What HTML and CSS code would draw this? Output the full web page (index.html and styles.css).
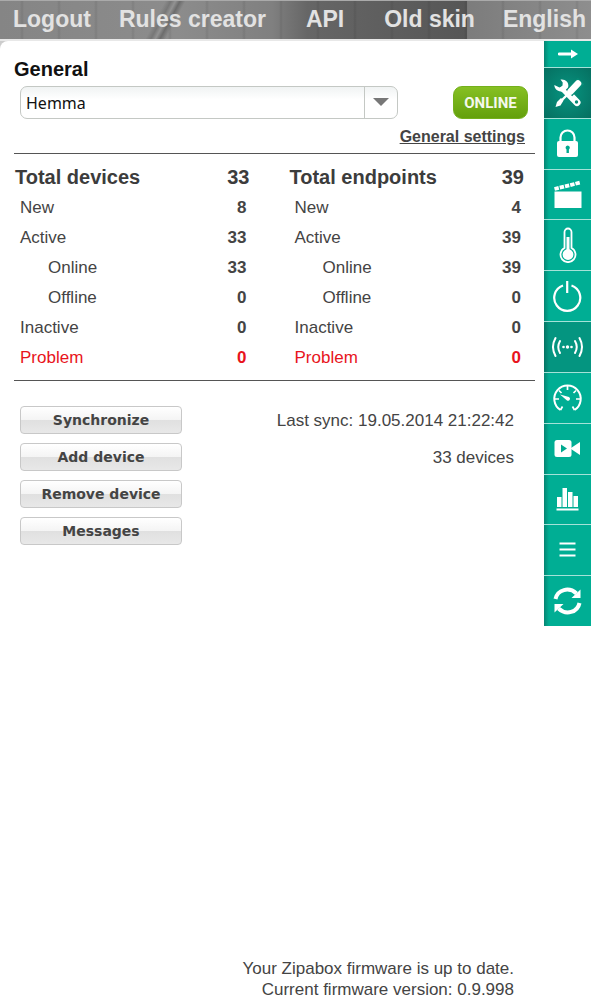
FILE: index.html
```html
<!DOCTYPE html>
<html lang="en">
<head>
    <meta charset="utf-8">
    <meta name="viewport" content="width=device-width, initial-scale=1.0">
    <title>Zipabox</title>
    <link rel="stylesheet" href="styles.css">
</head>
<body>

  <header class="topbar">
    <div class="topbar-group">
      <a href="#">Logout</a>
      <a href="#">Rules creator</a>
    </div>
    <a href="#">API</a>
    <div class="topbar-group">
      <a href="#">Old skin</a>
      <a href="#">English</a>
    </div>
  </header>

  <div class="page">
    <main class="panel">
      <h1><label for="box">General</label></h1>

      <div class="box-row">
        <div class="box-select">
          <select id="box">
            <option>Hemma</option>
          </select>
        </div>
        <button class="online" type="button">ONLINE</button>
      </div>
      <a class="settings" href="#">General settings</a>

      <section class="totals">
        <table>
          <tr class="total"><th>Total devices</th><td>33</td></tr>
          <tr><th>New</th><td>8</td></tr>
          <tr><th>Active</th><td>33</td></tr>
          <tr class="sub"><th>Online</th><td>33</td></tr>
          <tr class="sub"><th>Offline</th><td>0</td></tr>
          <tr><th>Inactive</th><td>0</td></tr>
          <tr class="problem"><th>Problem</th><td>0</td></tr>
        </table>
        <table>
          <tr class="total"><th>Total endpoints</th><td>39</td></tr>
          <tr><th>New</th><td>4</td></tr>
          <tr><th>Active</th><td>39</td></tr>
          <tr class="sub"><th>Online</th><td>39</td></tr>
          <tr class="sub"><th>Offline</th><td>0</td></tr>
          <tr><th>Inactive</th><td>0</td></tr>
          <tr class="problem"><th>Problem</th><td>0</td></tr>
        </table>
      </section>

      <section class="actions">
        <div class="action"><button type="button">Synchronize</button><span>Last sync: 19.05.2014 21:22:42</span></div>
        <div class="action"><button type="button">Add device</button><span>33 devices</span></div>
        <div class="action"><button type="button">Remove device</button></div>
        <div class="action"><button type="button">Messages</button></div>
      </section>

      <footer class="firmware">
        Your Zipabox firmware is up to date.<br>
        Current firmware version: 0.9.998
      </footer>
    </main>

    <nav class="sidebar">
      <a class="collapse" href="#" aria-label="Collapse">
        <svg width="20" height="10" viewBox="0 0 20 10"><path d="M1 5h13" stroke="#fff" stroke-width="2.8" stroke-linecap="round"/><path d="M13 .5l7 4.500-7 4.500z" fill="#fff"/></svg>
      </a>
      <a class="current" href="#" aria-label="Tools">
        <svg viewBox="0 0 32 32">
          <path d="M12 12L25 25.500" stroke="#fff" stroke-width="7" stroke-linecap="round"/>
          <path d="M8.500 2.500c4.500-.8 8.500 2.500 7.800 7-.4 3.500-4 6-7.500 5C5 14.100 2.500 11.500 2.300 8l5.200 2.600 3-1.600.2-3.500z" fill="#fff"/>
          <path d="M29 4L17 16" stroke="#078c77" stroke-width="9"/>
          <path d="M26 6.500L18.500 14.500" stroke="#fff" stroke-width="6.500" stroke-linecap="round"/>
          <path d="M18.500 14.500L8 25" stroke="#fff" stroke-width="2.400"/>
          <path d="M9 21l2.500 2.500-3 5-5 1.500 1.500-5z" fill="#fff"/>
          <circle cx="24.500" cy="25" r="1.700" fill="#078c77"/>
        </svg>
      </a>
      <a href="#" aria-label="Locks">
        <svg viewBox="0 0 32 32">
          <path d="M8.500 14V9.500a7 7 0 0 1 14 0V14" fill="none" stroke="#fff" stroke-width="2.200"/>
          <rect x="5" y="13" width="21" height="16" rx="2" fill="#fff"/>
          <path d="M15.700 17.500a2.200 2.200 0 0 1 1.200 4v3.500h-2.400v-3.500a2.200 2.200 0 0 1 1.200-4z" fill="#00a98f"/>
        </svg>
      </a>
      <a href="#" aria-label="Scenes">
        <svg viewBox="0 0 32 32">
          <path d="M2.500 12.500h27V29h-27z" fill="#fff"/>
          <path d="M2.500 10L28.500 3.500" stroke="#fff" stroke-width="3.800" stroke-dasharray="4.400 1"/>
        </svg>
      </a>
      <a href="#" aria-label="Climate">
        <svg viewBox="0 0 32 36">
          <path d="M12.500 21V5a3.500 3.500 0 0 1 7 0v16a7.500 7.500 0 1 1-7 0z" fill="none" stroke="#fff" stroke-width="1.800"/>
          <path d="M16 10v16" stroke="#fff" stroke-width="3"/>
          <circle cx="16" cy="27.500" r="5.400" fill="#fff"/>
        </svg>
      </a>
      <a href="#" aria-label="Power">
        <svg viewBox="0 0 32 32">
          <path d="M11 5.500a13 13 0 1 0 8.500 0M15.200 1v12" fill="none" stroke="#fff" stroke-width="2.200"/>
        </svg>
      </a>
      <a class="active" href="#" aria-label="Devices">
        <svg viewBox="0 0 32 32">
          <g fill="none" stroke="#fff" stroke-width="2" stroke-linecap="round">
            <path d="M3.500 7q-5 9 0 18M8 10q-3.500 6 0 12M27.500 7q5 9 0 18M23 10q3.500 6 0 12"/>
          </g>
          <g fill="#fff"><circle cx="11.500" cy="16" r="1.300"/><circle cx="15.500" cy="16" r="1.700"/><circle cx="19.500" cy="16" r="1.300"/></g>
        </svg>
      </a>
      <a href="#" aria-label="Meters">
        <svg viewBox="0 0 32 32">
          <path d="M8.500 28A13.200 13.200 0 1 1 22.500 28" fill="none" stroke="#fff" stroke-width="2"/>
          <path d="M15.500 4v4M3 17h4M24 17h4M7 8.500l2.500 2.500M24 8.500L21.500 11M8.500 28l2-3.500M22.500 28l-2-3.500" stroke="#fff" stroke-width="1.700"/>
          <path d="M8 12.500l9 2.500a2 2 0 0 1-2 3.500z" fill="#fff"/>
        </svg>
      </a>
      <a href="#" aria-label="Cameras">
        <svg viewBox="0 0 32 32">
          <rect x="2.500" y="7" width="17" height="17" rx="2.500" fill="#fff"/>
          <path d="M19 15l9-6v13l-9-6z" fill="#fff"/>
          <path d="M9 11.500l6 4-6 4z" fill="#00a98f"/>
        </svg>
      </a>
      <a href="#" aria-label="Statistics">
        <svg viewBox="0 0 32 32">
          <path d="M5 14h4.500v10H5zM10.500 5H15v19h-4.500zM16 9h4.500v15H16zM21.500 13H26v11h-4.500zM4.500 25.500h22v2h-22z" fill="#fff"/>
        </svg>
      </a>
      <a href="#" aria-label="List">
        <svg viewBox="0 0 32 32">
          <path d="M7.500 9.500h16M7.500 15.500h16M7.500 21.500h16" stroke="#fff" stroke-width="1.800"/>
        </svg>
      </a>
      <a href="#" aria-label="Refresh">
        <svg viewBox="0 0 32 32">
          <path d="M3.500 14C5.500 4.500 17 1.500 24.500 8.500M27.500 18C25.500 27.500 14 30.500 6.500 23.500" fill="none" stroke="#fff" stroke-width="4"/>
          <path d="M28.500 4.500V13H19.500zM2.500 27.500V19h9z" fill="#fff"/>
        </svg>
      </a>
    </nav>
  </div>

</body>
</html>
```
FILE: styles.css
```css
* {
  box-sizing: border-box;
}

body {
  margin: 0;
  min-height: 100vh;
  display: flex;
  flex-direction: column;
  font: 17px/21px "Liberation Sans", Arial, sans-serif;
  color: #444;
  background: #ccc;
}

/* top menu */
.topbar {
  display: flex;
  justify-content: space-between;
  align-items: center;
  height: 41px;
  padding: 0 5px 2px 13px;
  border-top: 1px solid #aaa;
  border-bottom: 2px solid #e8e8e8;
  background:
    linear-gradient(118deg, transparent 146px, #777 151px, #929292 155px, #6c6c6c 159px, transparent 164px),
    repeating-linear-gradient(90deg, transparent 0 20px, rgba(0, 0, 0, 0.08) 22px, transparent 24px 37px),
    linear-gradient(90deg, #858585, #8c8c8c 30%, #808080 46%, #666 52%, #565656 79%, #7c7c7c 79%, #8e8e8e);
}

.topbar a {
  font-size: 23px;
  font-weight: bold;
  line-height: 36px;
  color: #e2e2e2;
  text-decoration: none;
}

.topbar-group {
  display: flex;
  gap: 28px;
}

.page {
  flex: 1;
  display: flex;
  border-radius: 8px 0 0 0;
  background: #fff;
}

.panel {
  flex: 1;
  display: flex;
  flex-direction: column;
  padding: 17px 9px 8px 14px;
}

h1 {
  margin: 0 0 6px;
  font-size: 20px;
  line-height: 22px;
  color: #111;
}

.box-row {
  display: flex;
  gap: 55px;
  padding: 0 7px 0 6px;
}

.box-select {
  flex: 1;
  position: relative;
}

/* arrow over the select */
.box-select::after {
  content: "";
  position: absolute;
  top: 12px;
  right: 9px;
  border: 8px solid transparent;
  border-top-color: #777;
  border-bottom: 0;
  pointer-events: none;
}

.box-select select {
  display: block;
  width: 100%;
  height: 33px;
  padding: 0 40px 0 5px;
  appearance: none;
  border: 1px solid #c4c8c4;
  border-radius: 7px;
  background:
    linear-gradient(#c4c8c4, #c4c8c4) right 32px top / 1px 100% no-repeat,
    linear-gradient(#f0f3f3, #fff 40%);
  font: 16px "Noto Sans", sans-serif;
  color: #111;
}

.online {
  width: 75px;
  height: 33px;
  padding: 0;
  border: 1px solid #74b01c;
  border-radius: 9px;
  background: linear-gradient(#86c023, #64a00c);
  font: bold 15px Roboto, sans-serif;
  color: #f4f8ec;
}

.settings {
  align-self: flex-end;
  margin: 7px 10px 6px 0;
  font-size: 16px;
  font-weight: bold;
  color: #444;
}

/* device and endpoint counters */
.totals {
  display: grid;
  grid-template-columns: 1fr 1fr;
  gap: 40px;
  padding: 8px 11px 8px 1px;
  border-top: 1px solid #555;
  border-bottom: 1px solid #555;
}

.totals table {
  width: 100%;
  border-collapse: collapse;
}

.totals th,
.totals td {
  height: 30px;
  padding: 0;
}

.totals th {
  padding-left: 5px;
  font-weight: normal;
  text-align: left;
}

.totals td {
  padding-right: 3px;
  font-weight: bold;
  text-align: right;
}

.totals .total th,
.totals .total td {
  padding: 0;
  font-size: 20px;
  font-weight: bold;
  color: #3c3c3c;
}

.totals .sub th {
  padding-left: 33px;
}

.totals .problem {
  color: #e8141c;
}

.actions {
  display: flex;
  flex-direction: column;
  gap: 9px;
  padding: 25px 21px 0 6px;
}

.action {
  display: flex;
  justify-content: space-between;
  align-items: center;
}

.action button {
  width: 162px;
  height: 28px;
  padding: 0;
  border: 1px solid #c8c8c8;
  border-radius: 4px;
  background: linear-gradient(#fff, #f4f4f4 50%, #e0e0e0 50%, #e8e8e8);
  font: bold 14px "DejaVu Sans", Verdana, sans-serif;
  color: #444;
}

.firmware {
  margin-top: auto;
  padding-right: 21px;
  text-align: right;
}

/* icon menu */
.sidebar {
  display: flex;
  flex-direction: column;
  align-self: flex-start;
  width: 47px;
  height: 585px;
}

.sidebar a {
  flex: 1;
  display: flex;
  justify-content: center;
  align-items: center;
  border-bottom: 1px solid #a5e2d8;
  background: linear-gradient(90deg, #078573, #00ae94 5px);
}

.sidebar a:last-child {
  border-bottom: 0;
}

.sidebar .collapse {
  flex: 0 0 27px;
}

.sidebar .current {
  background: radial-gradient(#079480, #056f60);
}

.sidebar .active {
  background: linear-gradient(90deg, #067464, #049580 5px);
}

.sidebar svg {
  width: 32px;
}

.sidebar .collapse svg {
  width: 20px;
}
```
